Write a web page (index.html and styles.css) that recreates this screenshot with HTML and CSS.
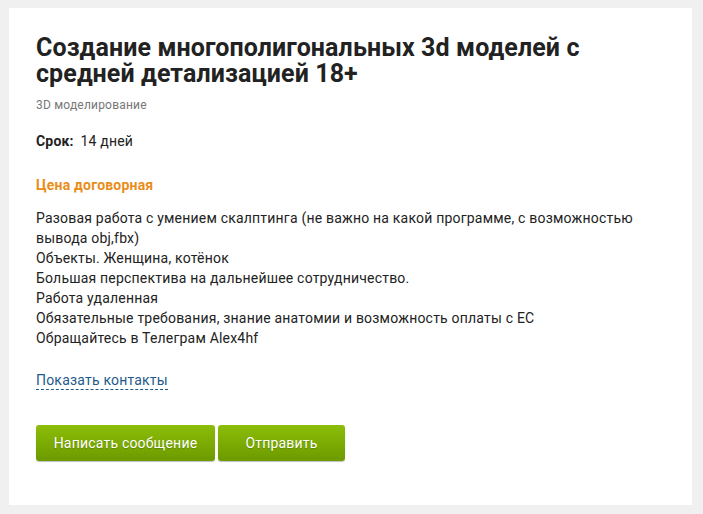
FILE: index.html
```html
<!DOCTYPE html>
<html lang="ru">
<head>
    <meta charset="UTF-8">
    <meta name="viewport" content="width=device-width, initial-scale=1.0">
    <title>Создание многополигональных 3d моделей</title>
    <link rel="stylesheet" href="styles.css">
</head>
<body>

    <div class="task">
        <h1 class="task-title">Создание многополигональных 3d моделей с средней детализацией 18+</h1>
        <div class="task-category">3D моделирование</div>

        <p class="task-term"><b>Срок:</b> 14 дней</p>

        <p class="task-price">Цена договорная</p>

        <div class="task-text">
            Разовая работа с умением скалптинга (не важно на какой программе, с возможностью вывода obj,fbx)<br>
            Объекты. Женщина, котёнок<br>
            Большая перспектива на дальнейшее сотрудничество.<br>
            Работа удаленная<br>
            Обязательные требования, знание анатомии и возможность оплаты с ЕС<br>
            Обращайтесь в Телеграм Alex4hf
        </div>

        <a href="#" class="contacts-link">Показать контакты</a>

        <div class="task-buttons">
            <button class="btn btn-wide">Написать сообщение</button>
            <button class="btn">Отправить</button>
        </div>
    </div>

</body>
</html>
```

FILE: styles.css
```css
body {
    font-family: Roboto, 'Liberation Sans', sans-serif;
    margin: 0;
    padding: 8px 11px 7px 9px;
    background-color: #f0f0f0;
    color: #222;
    letter-spacing: 0.2px;
}

.task {
    background-color: #fff;
    padding: 27px 27px 44px 27px;
}

.task-title {
    font-size: 25px;
    line-height: 26px;
    font-weight: bold;
    color: #222;
    letter-spacing: 0.1px;
    margin: 0;
}

.task-category {
    font-size: 12px;
    line-height: 16px;
    color: #777;
    margin-top: 10px;
}

p {
    margin: 0;
}

.task-term {
    font-size: 14px;
    line-height: 20px;
    margin-top: 18px;
}

.task-term b {
    margin-right: 3px;
}

.task-price {
    font-size: 14px;
    line-height: 20px;
    font-weight: bold;
    color: #e98d1a;
    margin-top: 24px;
}

.task-text {
    font-size: 14px;
    line-height: 20px;
    margin-top: 13px;
}

.contacts-link {
    display: inline-block;
    margin-top: 23px;
    font-size: 14px;
    line-height: 18px;
    color: #1e5a8a;
    text-decoration: none;
    border-bottom: 1px dashed #1e5a8a;
}

.task-buttons {
    display: flex;
    gap: 3px;
    margin-top: 35px;
}

.btn {
    height: 36px;
    padding: 0 16px;
    width: 127px;
    font-family: Roboto, 'Liberation Sans', sans-serif;
    font-size: 14px;
    letter-spacing: 0.2px;
    color: #fff;
    background: linear-gradient(#8cbd07, #6c9a00);
    border: none;
    border-radius: 3px;
    box-shadow: 0 1px 1px rgba(0, 0, 0, 0.25);
    text-shadow: 0 1px 1px rgba(0, 0, 0, 0.2);
    cursor: pointer;
}

.btn-wide {
    width: 179px;
}
```
